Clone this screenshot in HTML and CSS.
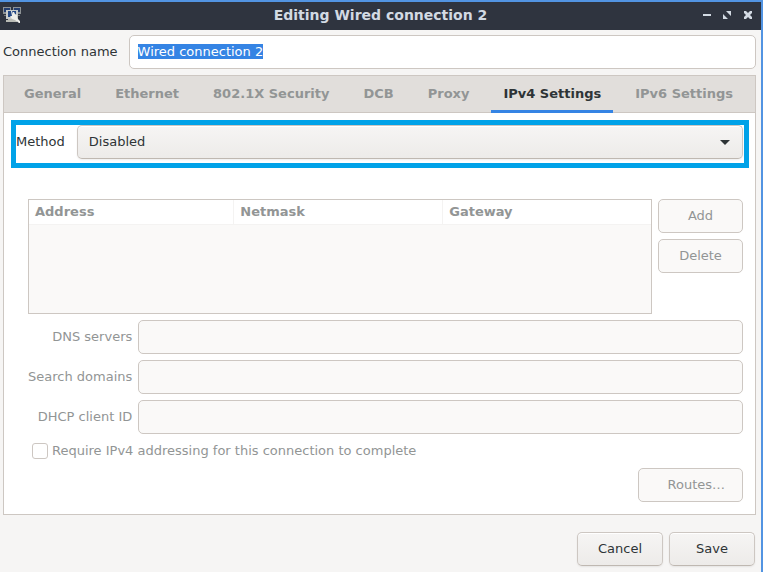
FILE: index.html
```html
<!DOCTYPE html>
<html lang="en">
<head>
<meta charset="utf-8">
<title>Editing Wired connection 2</title>
<link rel="stylesheet" href="styles.css">
</head>
<body>
<div class="window">
  <header class="titlebar">
    <svg class="app-icon" viewBox="0 0 20 18" width="20" height="18" aria-hidden="true">
      <path fill="#8d9295" d="M1 1h8v7H1zM11 1h8v7h-8z"/>
      <path fill="#253f70" d="M2 2h6v4H2zM12 2h6v4h-6z"/>
      <path fill="#777b7d" d="M2 9h4v1H2zM15 9h3v1h-3z"/>
      <path fill="#c9ccca" d="M4 4h12v9H4z"/>
      <path fill="#244884" d="M6 5h8v6H6z"/>
      <path fill="#b9bbb5" d="M6 13h7v1h2v2H4v-2h2z"/>
      <path fill="#eeeeea" d="M9 5h1l1 3V6h1l1 2 2 1v3l3 3v2h-1l-4-3-3-1-2-3h2z"/>
    </svg>
    <h1 class="title">Editing Wired connection 2</h1>
    <div class="window-controls">
      <button type="button" class="control" aria-label="Minimize"><svg viewBox="0 0 8 8" width="8" height="8"><path d="M0 3h8v2H0z"/></svg></button>
      <button type="button" class="control" aria-label="Restore"><svg viewBox="0 0 8 8" width="8" height="8"><path d="M3 0h5v5zM0 3l5 5H0z"/></svg></button>
      <button type="button" class="control" aria-label="Close"><svg viewBox="0 0 8 8" width="8" height="8"><path d="M0 0h2l2 2 2-2h2v2L6 4l2 2v2H6L4 6 2 8H0V6l2-2-2-2z"/></svg></button>
    </div>
  </header>

  <form class="content">
    <div class="name-row">
      <label for="name">Connection name</label>
      <input id="name" class="entry" type="text" value="Wired connection 2" spellcheck="false" autofocus>
    </div>

    <div class="notebook">
      <div class="tabs" role="tablist">
        <button type="button" class="tab" role="tab">General</button>
        <button type="button" class="tab" role="tab">Ethernet</button>
        <button type="button" class="tab" role="tab">802.1X Security</button>
        <button type="button" class="tab" role="tab">DCB</button>
        <button type="button" class="tab" role="tab">Proxy</button>
        <button type="button" class="tab active" role="tab" aria-selected="true">IPv4 Settings</button>
        <button type="button" class="tab" role="tab">IPv6 Settings</button>
      </div>

      <div class="method-row">
        <label for="method">Method</label>
        <div class="combo">
          <select id="method" class="select"><option>Disabled</option></select>
          <svg class="arrow" viewBox="0 0 10 5" width="10" height="5" aria-hidden="true"><path d="M0 0h10L5 5z"/></svg>
        </div>
      </div>

      <div class="settings">
        <div class="addresses">
          <div class="table-frame">
            <table class="table">
              <thead><tr><th class="col-address">Address</th><th class="col-netmask">Netmask</th><th>Gateway</th></tr></thead>
              <tbody></tbody>
            </table>
          </div>
          <div class="table-actions">
            <button type="button" class="button" disabled>Add</button>
            <button type="button" class="button" disabled>Delete</button>
          </div>
        </div>

        <div class="fields">
          <label for="dns">DNS servers</label>
          <input id="dns" class="entry" type="text" disabled>
          <label for="search">Search domains</label>
          <input id="search" class="entry" type="text" disabled>
          <label for="dhcp">DHCP client ID</label>
          <input id="dhcp" class="entry" type="text" disabled>
        </div>

        <div class="check-row">
          <input id="require" class="check" type="checkbox" disabled>
          <label for="require">Require IPv4 addressing for this connection to complete</label>
        </div>

        <div class="routes-row">
          <button type="button" class="button routes" disabled>Routes…</button>
        </div>
      </div>
    </div>

    <div class="dialog-actions">
      <button type="button" class="button">Cancel</button>
      <button type="submit" class="button">Save</button>
    </div>
  </form>
</div>
<script src="main.js"></script>
</body>
</html>
```
FILE: styles.css
```css
* {
  box-sizing: border-box;
}

body {
  margin: 0;
  background: #f6f5f4;
  color: #2e3436;
  font: 13px/17px "DejaVu Sans", sans-serif;
}

button,
input,
select {
  margin: 0;
  color: inherit;
  font: inherit;
}

.window {
  min-height: 100vh;
  border: solid #5294e2;
  border-width: 2px 2px 0 0;
}

.titlebar {
  display: grid;
  grid-template-columns: 60px 1fr 60px;
  align-items: center;
  height: 28px;
  padding: 0 2px 2px;
  background: #2f343f;
  color: #d3dae3;
}

.title {
  margin: 0;
  font-size: 14px;
  line-height: 18px;
  text-align: center;
}

.window-controls {
  display: flex;
  justify-content: flex-end;
  gap: 5px;
  padding-right: 3px;
}

.control {
  display: grid;
  place-items: center;
  width: 16px;
  height: 16px;
  padding: 0;
  border: 0;
  background: none;
  fill: #d3dae3;
}

.content {
  padding: 5px 5px 6px 3px;
}

.name-row {
  display: flex;
  align-items: center;
  gap: 11px;
  margin-bottom: 6px;
}

.name-row label,
.fields label {
  padding-bottom: 2px;
}

.entry {
  flex: 1;
  min-width: 0;
  height: 34px;
  padding: 0 8px 2px;
  border: 1px solid #cdc7c2;
  border-radius: 5px;
  outline: 0;
  background: #fff;
}

.entry::selection {
  background: #3584e4;
  color: #fff;
}

.entry:disabled {
  background: #faf9f8;
}

.notebook {
  border: 1px solid #cdc7c2;
  background: #fff;
}

.tabs {
  display: flex;
  gap: 10px;
  height: 37px;
  padding: 0 8px;
  background: #e1dedb;
  box-shadow: inset 0 -1px #cdc7c2;
}

.tab {
  padding: 0 12px 2px;
  border: 0;
  background: none;
  color: #929595;
  font-weight: bold;
  white-space: nowrap;
}

.tab.active {
  box-shadow: inset 0 -3px #3584e4;
  color: #2e3436;
}

.method-row {
  display: flex;
  gap: 12px;
  margin: 7px 6px 0 7px;
  padding: 0 1px 4px 0;
  border: 5px solid #00a2e8;
}

.method-row label {
  padding-top: 8px;
}

.combo {
  display: grid;
  flex: 1;
  align-items: center;
}

.select,
.arrow {
  grid-area: 1 / 1;
}

.select {
  width: 100%;
  height: 34px;
  padding: 0 11px 2px;
  appearance: none;
  border: 1px solid #cdc7c2;
  border-bottom-color: #bfb8b1;
  border-radius: 5px;
  background: linear-gradient(#f6f5f4, #edebe9);
  box-shadow: inset 0 1px #fff, 0 1px 2px rgba(0, 0, 0, 0.07);
}

.arrow {
  justify-self: end;
  margin-right: 13px;
  fill: #2e3436;
  pointer-events: none;
}

.settings {
  padding: 31px 12px 12px 24px;
  color: #929595;
}

.addresses {
  display: flex;
  gap: 6px;
  margin-bottom: 6px;
}

.table-frame {
  flex: 1;
  height: 115px;
  border: 1px solid #cdc7c2;
  background: #faf9f8;
}

.table {
  width: 100%;
  border-collapse: separate;
  border-spacing: 0;
  table-layout: fixed;
}

.table th {
  height: 25px;
  padding: 0 6px 2px;
  border: solid #f4f3f2;
  border-width: 0 1px 1px 0;
  background: #fff;
  text-align: left;
}

.table th:last-child {
  border-right: 0;
}

.col-address {
  width: 33%;
}

.col-netmask {
  width: 209px;
}

.table-actions {
  display: flex;
  flex-direction: column;
  gap: 6px;
  width: 85px;
}

.button {
  height: 34px;
  padding: 0 16px 2px;
  border: 1px solid #cdc7c2;
  border-bottom-color: #bfb8b1;
  border-radius: 5px;
  background: linear-gradient(#f6f5f4, #edebe9);
  box-shadow: inset 0 1px #fff, 0 1px 2px rgba(0, 0, 0, 0.07);
}

.button:disabled {
  border-color: #cdc7c2;
  background: #faf9f8;
  box-shadow: none;
}

.fields {
  display: grid;
  grid-template-columns: auto 1fr;
  align-items: center;
  gap: 6px;
  text-align: right;
}

.check-row {
  display: flex;
  align-items: center;
  gap: 4px;
  margin: 8px 0 9px 4px;
}

.check {
  width: 16px;
  height: 16px;
  appearance: none;
  border: 1px solid #cdc7c2;
  border-radius: 3px;
  background: #fff;
}

.routes-row {
  display: flex;
  justify-content: flex-end;
}

.routes {
  padding: 0 17px 2px 28px;
}

.dialog-actions {
  display: flex;
  justify-content: flex-end;
  gap: 6px;
  padding: 17px 1px 0 0;
}

.dialog-actions .button {
  width: 86px;
}
```
FILE: main.js
```js
const nameEntry = document.getElementById("name");
nameEntry.focus();
nameEntry.select();
```
